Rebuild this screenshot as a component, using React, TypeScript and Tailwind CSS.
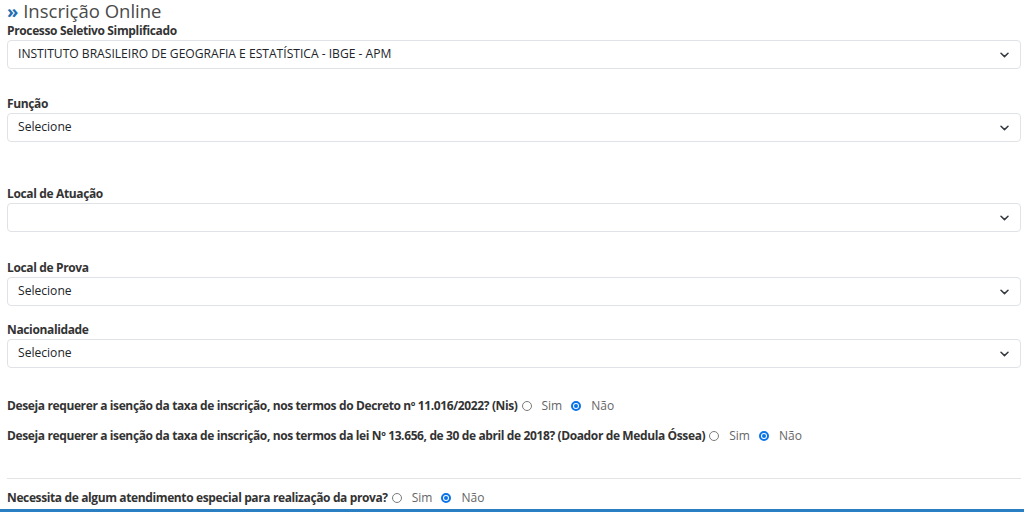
import React from 'react';

const font = { fontFamily: '"Open Sans", "Liberation Sans", sans-serif' };

function Chevron() {
  return (
    <svg width="9" height="6" viewBox="0 0 9 6" className="absolute right-[11px] top-1/2 -translate-y-1/2">
      <path d="M1 1.2 L4.5 4.6 L8 1.2" fill="none" stroke="#343a40" strokeWidth="1.5" strokeLinecap="round" strokeLinejoin="round" />
    </svg>
  );
}

function Field({ label, value, gap }: { label: string; value: string; gap: string }) {
  return (
    <div className={gap}>
      <label className="block text-[12px] leading-4 font-bold tracking-[-0.36px] text-[#333]">{label}</label>
      <div className="relative mt-px h-[29px] border border-[#dfe2e6] rounded-[4px] flex items-center pl-[10px] text-[12.1px] text-[#212529]">
        {value}
        <Chevron />
      </div>
    </div>
  );
}

function Radio({ checked }: { checked?: boolean }) {
  if (checked) {
    return (
      <span className="inline-flex w-[10px] h-[10px] rounded-full border-2 border-[#0a73e8] bg-white items-center justify-center">
        <span className="w-[4px] h-[4px] rounded-full bg-[#0a73e8]" />
      </span>
    );
  }
  return <span className="inline-block w-[10px] h-[10px] rounded-full border border-[#7a7a7a] bg-white" />;
}

function Question({ text, gap }: { text: string; gap: string }) {
  return (
    <div className={`flex items-center h-5 text-[12px] ${gap}`}>
      <span className="font-bold tracking-[-0.38px] text-[#333]">{text}</span>
      <span className="ml-[4px] flex items-center"><Radio /></span>
      <span className="ml-[10px] text-[#666]">Sim</span>
      <span className="ml-[9px] flex items-center"><Radio checked /></span>
      <span className="ml-[10px] text-[#666]">Não</span>
    </div>
  );
}

export default function App() {
  return (
    <div className="w-[1024px] h-[512px] overflow-hidden bg-white" style={font}>
      <div className="pl-[7px] pr-[3px]">
        <h1 className="pt-px text-[18.5px] leading-[20px] text-[#4a4a4a]">
          <span className="text-[#1f6fb2] font-bold">»</span> Inscrição Online
        </h1>
        <Field gap="mt-[2px]" label="Processo Seletivo Simplificado" value="INSTITUTO BRASILEIRO DE GEOGRAFIA E ESTATÍSTICA - IBGE - APM" />
        <Field gap="mt-[27px]" label="Função" value="Selecione" />
        <Field gap="mt-[44px]" label="Local de Atuação" value="" />
        <Field gap="mt-[28px]" label="Local de Prova" value="Selecione" />
        <Field gap="mt-[16px]" label="Nacionalidade" value="Selecione" />
        <Question gap="mt-[28px]" text="Deseja requerer a isenção da taxa de inscrição, nos termos do Decreto nº 11.016/2022? (Nis)" />
        <Question gap="mt-[10px]" text="Deseja requerer a isenção da taxa de inscrição, nos termos da lei Nº 13.656, de 30 de abril de 2018? (Doador de Medula Óssea)" />
        <hr className="mt-[32px] border-t border-[#e3e3e3]" />
        <Question gap="mt-[9px]" text="Necessita de algum atendimento especial para realização da prova?" />
      </div>
      <div className="mt-px h-[3px] bg-[#2a7fc2]" />
    </div>
  );
}
